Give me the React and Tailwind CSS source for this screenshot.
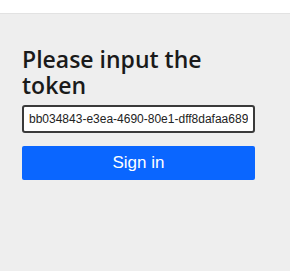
import React from "react";

export default function App() {
  return (
    <div className="w-[290px] h-[271px] bg-white flex flex-col">
      {/* top strip */}
      <div className="h-[14px] bg-white border-b border-[#e2e2e2]" />

      <div className="flex-1 bg-[#eeeeee] px-[22px] pt-[32px]">
        <div className="w-[233px] flex flex-col">
          <h1 className="text-[23px] leading-[26px] font-semibold text-[#1a1a1a] font-['Open_Sans',sans-serif]">
            Please input the token
          </h1>

          <input
            type="text"
            defaultValue="bb034843-e3ea-4690-80e1-dff8dafaa689"
            className="mt-[7px] h-[28px] w-full bg-white border-2 border-[#3a3a3a] rounded-[3px] px-[5px] text-[12px] text-[#222] font-['Liberation_Sans',sans-serif] outline-none"
          />

          <button className="mt-[13px] h-[34px] w-full bg-[#0a66ff] text-white text-[17px] font-['Liberation_Sans',sans-serif] rounded-[2px]">
            Sign in
          </button>
        </div>
      </div>
    </div>
  );
}
